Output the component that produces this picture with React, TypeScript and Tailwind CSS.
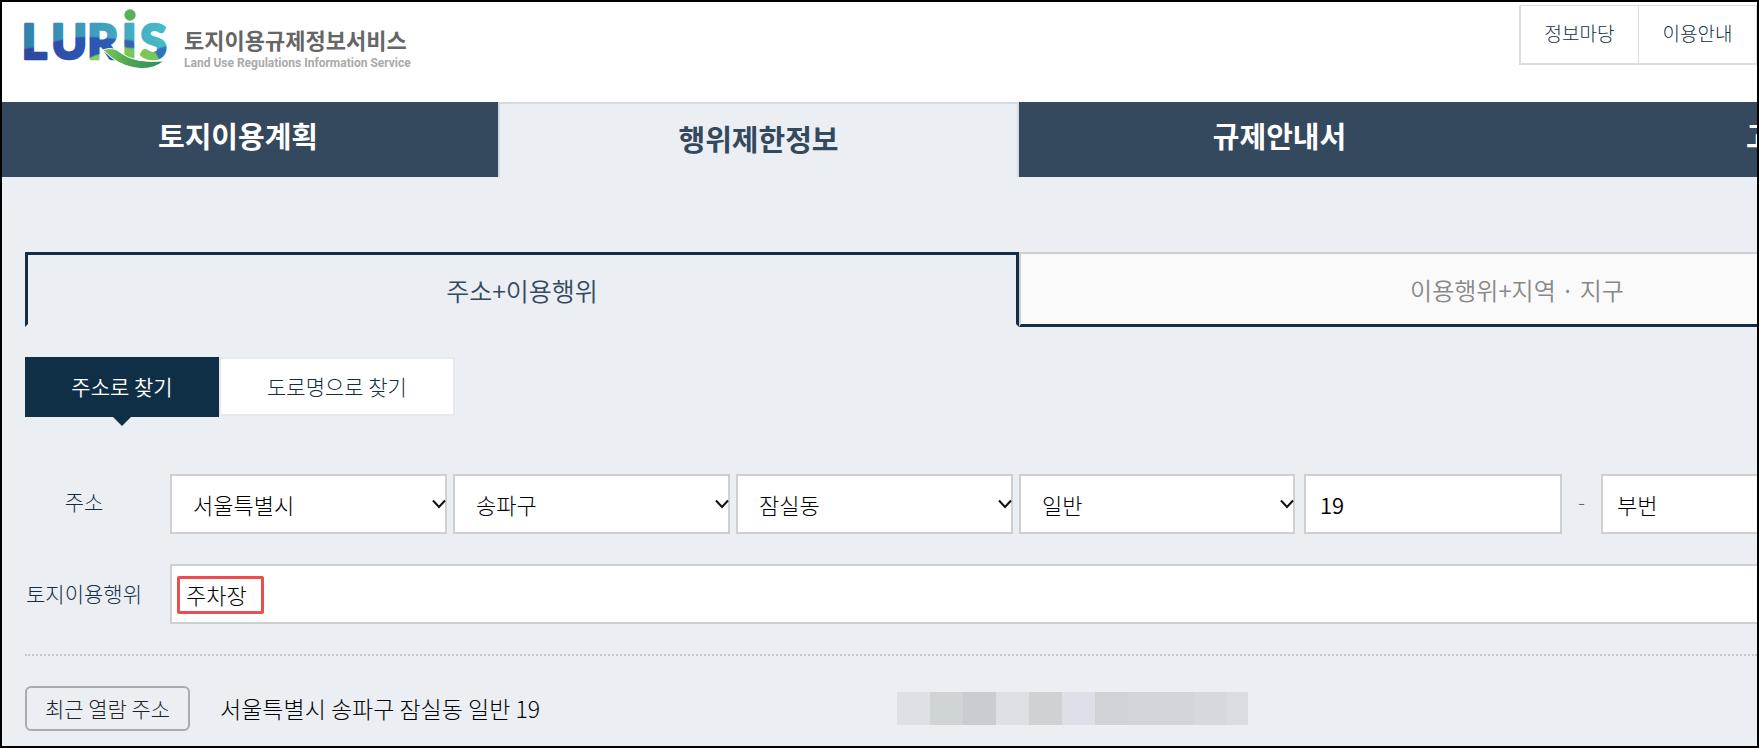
const mainMenu = [
  { label: "토지이용계획", cell: "bg-[#35495e] text-white pr-6 pb-2" },
  {
    label: "행위제한정보",
    cell: "bg-[#ebeff4] text-[#35495e] border-t-2 border-x-2 border-[#d6dade] pb-1",
  },
  { label: "규제안내서", cell: "bg-[#35495e] text-white pb-2" },
];

const regionSelects = [
  { id: "sido", label: "시도", value: "서울특별시" },
  { id: "sigungu", label: "시군구", value: "송파구" },
  { id: "dong", label: "읍면동", value: "잠실동" },
  { id: "kind", label: "구분", value: "일반" },
];

const mosaic = [
  "w-[33px] bg-[#dde1e5]",
  "w-[33px] bg-[#cfd4d7]",
  "w-[33px] bg-[#c9cdd2]",
  "w-[33px] bg-[#dde1e5]",
  "w-[33px] bg-[#d0d1d5]",
  "w-[33px] bg-[#dde0e9]",
  "w-[33px] bg-[#cfd3d8]",
  "w-[33px] bg-[#d4d5da]",
  "w-[33px] bg-[#d4d5da]",
  "w-[33px] bg-[#d5d8dd]",
  "w-[21px] bg-[#d9dce1]",
];

function Logo() {
  return (
    <a href="#home" className="flex items-start pt-[5px] pl-[18px]">
      <svg viewBox="60 21 456 192" className="h-16 w-[152px]" aria-label="LURIS" role="img">
        <defs>
          <linearGradient id="teal" x1="60" x2="510" y1="0" y2="0" gradientUnits="userSpaceOnUse">
            <stop offset="0" stopColor="#2f7fae" />
            <stop offset="0.5" stopColor="#3f9fbd" />
            <stop offset="1" stopColor="#48bcc8" />
          </linearGradient>
          <linearGradient id="blue" x1="60" x2="510" y1="0" y2="0" gradientUnits="userSpaceOnUse">
            <stop offset="0" stopColor="#2f479f" />
            <stop offset="0.5" stopColor="#2c57b3" />
            <stop offset="1" stopColor="#3277bd" />
          </linearGradient>
          <linearGradient id="leaf" x1="290" x2="490" y1="150" y2="200" gradientUnits="userSpaceOnUse">
            <stop offset="0" stopColor="#86cf5a" />
            <stop offset="0.5" stopColor="#4fa552" />
            <stop offset="1" stopColor="#2c8b66" />
          </linearGradient>
          <pattern id="bands" patternUnits="userSpaceOnUse" x="60" y="0" width="460" height="220" viewBox="60 0 460 220">
            <rect x="60" width="460" height="220" fill="url(#teal)" />
            <path
              d="M60 150 Q110 142 160 126 Q220 106 300 112 Q350 116 400 122 L408 146 Q450 160 520 130 V220 H60Z"
              fill="url(#blue)"
            />
            <path d="M262 178 Q290 160 312 162 L330 190 H262Z" fill="#86cf5a" />
            <path d="M366 138 Q400 150 412 140 Q450 140 468 160 L484 190 H366Z" fill="#79c65a" />
          </pattern>
        </defs>
        <text
          x="65 154 262 366 421"
          y="177"
          fontFamily="Lato, sans-serif"
          fontWeight="900"
          fontSize="144"
          fill="url(#bands)"
          stroke="url(#bands)"
          strokeWidth="8"
          strokeLinejoin="round"
        >
          LURIS
        </text>
        <circle cx="390" cy="45" r="17" fill="#58b158" />
        <path
          d="M308 150 Q340 138 362 158 Q400 190 492 183 Q464 206 424 206 Q372 202 336 174 Q320 160 308 150Z"
          fill="url(#leaf)"
          stroke="#fff"
          strokeWidth="3"
        />
      </svg>
      <span className="flex flex-col gap-1 pt-[18px] pl-3">
        <span className="text-[22px] leading-7 font-bold text-[#666]">토지이용규제정보서비스</span>
        <span className="font-[Roboto,sans-serif] text-[12px] leading-3 font-bold text-[#aaa]">
          Land Use Regulations Information Service
        </span>
      </span>
    </a>
  );
}

function Header() {
  return (
    <header className="flex h-[100px] items-start justify-between bg-white">
      <Logo />
      <nav className="mt-[3px] flex h-[60px] w-[238px] border-t border-r border-b-2 border-l-2 border-[#dcdee0] text-[19px] font-light text-[#122d45]">
        <a href="#info" className="flex flex-1 items-center justify-center pb-0.5">
          정보마당
        </a>
        <a href="#guide" className="flex flex-1 items-center justify-center border-l border-[#dcdee0] pb-0.5">
          이용안내
        </a>
      </nav>
    </header>
  );
}

function MainMenu() {
  return (
    <nav className="grid h-[75px] grid-cols-[496fr_521fr_521fr_217fr] text-[29px] font-bold">
      {mainMenu.map((m) => (
        <a key={m.label} href="#menu" className={`flex items-center justify-center ${m.cell}`}>
          {m.label}
        </a>
      ))}
      <a href="#notice" className="flex min-w-0 items-center overflow-hidden bg-[#35495e] pb-2 pl-[206px] whitespace-nowrap text-white">
        고
      </a>
    </nav>
  );
}

export default function App() {
  return (
    <div className="overflow-hidden border-2 border-black bg-[#ebeff4] font-['Noto_Sans_CJK_KR',sans-serif] text-[#122d45]">
      <Header />
      <MainMenu />
      <main className="pt-[75px] pb-[15px] pl-[23px]">
        <div role="tablist" className="grid h-[75px] grid-cols-[994fr_738fr] text-[25px] font-[350]">
          <button role="tab" aria-selected="true" className="border-3 border-[#122d45] border-b-transparent pt-0.5 text-[#35495e]">
            주소+이용행위
          </button>
          <button
            role="tab"
            aria-selected="false"
            className="border-t-2 border-b-3 border-l-2 border-[#cccfd2] border-b-[#122d45] bg-[#fafafa] pt-0.5 pl-64 text-[24px] text-[#888]"
          >
            이용행위+지역 · 지구
          </button>
        </div>

        <div className="mt-[30px] flex h-[60px] items-start text-[21px] font-light">
          <button className="relative h-[60px] w-[194px] bg-[#0f2f47] font-[350] text-white">
            주소로 찾기
            <svg viewBox="0 0 18 9" className="absolute top-full left-1/2 h-[9px] w-[18px] -translate-x-1/2">
              <path d="M0 0H18L9 9Z" fill="#0f2f47" />
            </svg>
          </button>
          <button className="h-[59px] w-[236px] border-2 border-[#e6e8eb] bg-white">도로명으로 찾기</button>
        </div>

        <form className="mt-[57px] flex flex-col gap-[30px] text-[21px] font-light">
          <div className="flex items-center">
            <label htmlFor="sido" className="w-[118px] shrink-0 pb-1 text-center">
              주소
            </label>
            <div className="ml-[27px] grid h-[60px] flex-1 grid-cols-[277fr_277fr_277fr_276fr] gap-[6px] text-[22px] text-black">
              {regionSelects.map((s) => (
                <div key={s.id} className="relative">
                  <select
                    id={s.id}
                    aria-label={s.label}
                    className="h-[60px] w-full appearance-none border-2 border-[#cdcfd1] bg-white pl-[21px]"
                  >
                    <option>{s.value}</option>
                  </select>
                  <svg
                    viewBox="0 0 14 10"
                    className="pointer-events-none absolute top-[25px] right-px h-[10px] w-[14px]"
                    fill="none"
                    stroke="#111"
                    strokeWidth="2"
                  >
                    <path d="M1 1.5L7 8L13 1.5" />
                  </svg>
                </div>
              ))}
            </div>
            <input
              aria-label="본번"
              defaultValue="19"
              className="ml-[9px] h-[60px] w-[258px] border-2 border-[#cdcfd1] bg-white pl-[14px] text-[22px] font-[350] text-black"
            />
            <span className="w-[39px] pb-1 text-center text-[#666]">-</span>
            <input
              aria-label="부번"
              defaultValue="부번"
              className="h-[60px] w-[156px] border-2 border-r-0 border-[#cdcfd1] bg-white pl-[14px] text-[22px] text-black"
            />
          </div>
          <div className="flex items-center">
            <label htmlFor="use" className="w-[118px] shrink-0 text-center">
              토지이용행위
            </label>
            <div className="relative ml-[27px] flex-1">
              <input
                id="use"
                defaultValue="주차장"
                className="block h-[60px] w-full border-2 border-r-0 border-[#cdcfd1] bg-white pl-[14px] text-[22px] text-black"
              />
              <span className="pointer-events-none absolute top-3 left-[7px] h-[38px] w-[87px] rounded-xs border-3 border-[#ef4d4d]" />
            </div>
          </div>
        </form>

        <div className="mt-[30px] flex items-center border-t-2 border-dotted border-[#c6c9cd] pt-[30px]">
          <button className="h-[45px] w-[165px] rounded-md border-2 border-[#a9abae] text-[21px] font-light text-[#222]">
            최근 열람 주소
          </button>
          <a href="#recent" className="w-[676px] pl-[30px] text-[23px] font-light text-black">
            서울특별시 송파구 잠실동 일반 19
          </a>
          <div className="ml-[31px] flex h-[33px]">
            {mosaic.map((c, i) => (
              <span key={i} className={c} />
            ))}
          </div>
        </div>
      </main>
    </div>
  );
}
